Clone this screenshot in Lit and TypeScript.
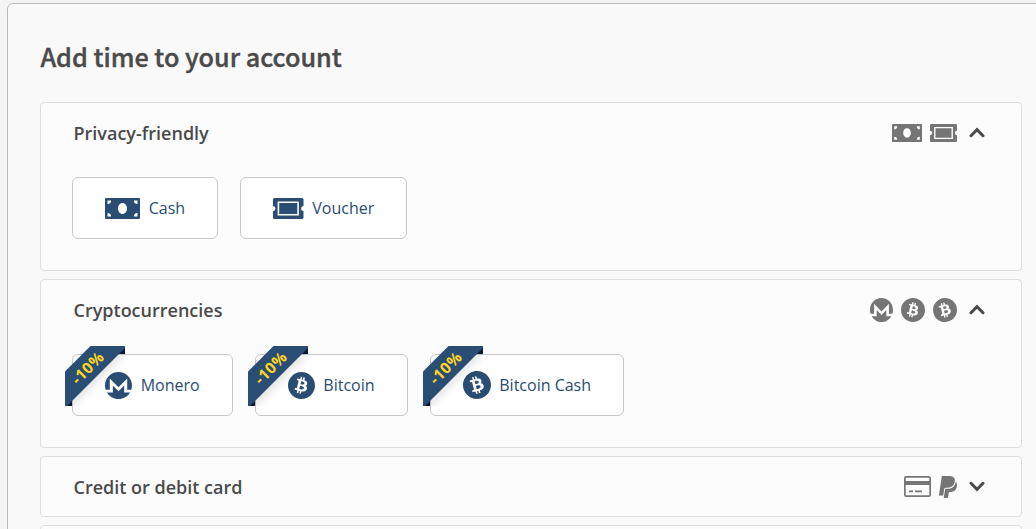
import { LitElement, html, css, svg, nothing } from "lit";
import { customElement, property } from "lit/decorators.js";

interface Method {
  icon: string;
  label: string;
  discount?: string;
}

interface Group {
  title: string;
  icons: string[];
  open: boolean;
  methods: Method[];
}

const GROUPS: Group[] = [
  {
    title: "Privacy-friendly",
    icons: ["cash", "voucher"],
    open: true,
    methods: [
      { icon: "cash", label: "Cash" },
      { icon: "voucher", label: "Voucher" },
    ],
  },
  {
    title: "Cryptocurrencies",
    icons: ["monero", "bitcoin", "bitcoin-cash"],
    open: true,
    methods: [
      { icon: "monero", label: "Monero", discount: "-10%" },
      { icon: "bitcoin", label: "Bitcoin", discount: "-10%" },
      { icon: "bitcoin-cash", label: "Bitcoin Cash", discount: "-10%" },
    ],
  },
  {
    title: "Credit or debit card",
    icons: ["card", "paypal"],
    open: false,
    methods: [],
  },
  { title: "", icons: [], open: false, methods: [] },
];

const coin =
  "M504 256c0 136.967-111.033 248-248 248S8 392.967 8 256 119.033 8 256 8s248 111.033 248 248zm-141.651-35.33c4.937-32.999-20.191-50.739-54.55-62.573l11.146-44.702-27.213-6.781-10.851 43.524c-7.154-1.783-14.502-3.464-21.803-5.13l10.929-43.81-27.198-6.781-11.153 44.686c-5.922-1.349-11.735-2.682-17.377-4.084l.031-.14-37.53-9.37-7.239 29.062s20.191 4.627 19.765 4.913c11.022 2.751 13.014 10.044 12.68 15.825l-12.696 50.925c.76.194 1.744.473 2.829.907-.907-.225-1.876-.473-2.876-.713l-17.796 71.338c-1.349 3.348-4.767 8.37-12.471 6.464.271.395-19.78-4.937-19.78-4.937l-13.51 31.147 35.414 8.827c6.588 1.651 13.045 3.379 19.4 5.006l-11.262 45.213 27.182 6.781 11.153-44.733a1038.209 1038.209 0 0 0 21.687 5.627l-11.115 44.523 27.213 6.781 11.262-45.128c46.404 8.781 81.299 5.239 95.986-36.727 11.834-33.79-.589-53.281-25.004-65.991 17.78-4.098 31.174-15.792 34.747-39.949zm-62.177 87.179c-8.41 33.79-65.308 15.523-83.755 10.943l14.944-59.899c18.446 4.603 77.6 13.717 68.811 48.956zm8.417-87.667c-7.673 30.736-55.031 15.12-70.393 11.292l13.548-54.327c15.363 3.828 64.836 10.973 56.845 43.035z";

const ICONS: Record<string, { box: string; shape: unknown }> = {
  cash: {
    box: "0 0 35 21",
    shape: svg`<path fill-rule="evenodd" d="M1 0h33a1 1 0 0 1 1 1v19a1 1 0 0 1-1 1H1a1 1 0 0 1-1-1V1a1 1 0 0 1 1-1zM17.500 5c-2.500 0-4.500 2.400-4.500 5.500s2 5.500 4.500 5.500 4.500-2.400 4.500-5.500S20 5 17.500 5zM2.500 2.500v3.600A3.600 3.600 0 0 0 6.100 2.500zM32.500 2.500h-3.600a3.600 3.600 0 0 0 3.600 3.600zM2.500 18.500h3.600a3.600 3.600 0 0 0-3.600-3.600zM32.500 18.500v-3.600a3.600 3.600 0 0 0-3.600 3.600z" />`,
  },
  voucher: {
    box: "0 0 31 21",
    shape: svg`<path fill-rule="evenodd" d="M1.500 0h28A1.500 1.500 0 0 1 31 1.500V8a2.500 2.500 0 0 0 0 5v6.500a1.500 1.500 0 0 1-1.500 1.500h-28A1.500 1.500 0 0 1 0 19.500V13a2.500 2.500 0 0 0 0-5V1.500A1.500 1.500 0 0 1 1.500 0zM4.700 3.500v14h21.600v-14zM6.300 5.100h18.400v10.800H6.300z" />`,
  },
  monero: {
    box: "0 8 496 496",
    shape: svg`<path d="M352 384h108.400C417 455.900 338.100 504 248 504S79 455.900 35.600 384H144V256.200L248 361l104-105v128zM88 336V128l159.400 159.400L408 128v208h74.800c8.500-25.100 13.200-52 13.200-80C496 119 385 8 248 8S0 119 0 256c0 28 4.600 54.900 13.200 80H88z" />`,
  },
  bitcoin: {
    box: "8 8 496 496",
    shape: svg`<path d=${coin} />`,
  },
  "bitcoin-cash": {
    box: "8 8 496 496",
    shape: svg`<path transform="rotate(-28 256 256)" d=${coin} />`,
  },
  card: {
    box: "0 0 27 21",
    shape: svg`<path fill-rule="evenodd" d="M2.300 0h22.400A2.300 2.300 0 0 1 27 2.300v16.400a2.300 2.300 0 0 1-2.300 2.300H2.300A2.300 2.300 0 0 1 0 18.700V2.300A2.300 2.300 0 0 1 2.300 0zM2.300 1.700a.6.6 0 0 0-.6.6V5h23.600V2.300a.6.6 0 0 0-.6-.6zM1.700 9v9.700a.6.6 0 0 0 .6.6h22.400a.6.6 0 0 0 .6-.6V9zM5 14.500h4v1.700H5zM11 14.500h7v1.700h-7z" />`,
  },
  paypal: {
    box: "0 29.500 384 453.500",
    shape: svg`<path d="M111.400 295.900c-3.500 19.200-17.400 108.700-21.500 134-.3 1.800-1 2.500-3 2.500H12.300c-7.600 0-13.100-6.600-12.100-13.900L58.800 46.600c1.500-9.600 10.100-16.900 20-16.900 152.300 0 165.100-3.700 204 11.400 60.100 23.300 65.600 79.500 44 140.300-21.500 62.600-72.500 89.500-140.100 90.300-43.400.7-69.500-7-75.300 24.200zM357.100 152c-1.800-1.300-2.500-1.800-3 1.300-2 11.400-5.100 22.500-8.800 33.600-39.900 113.800-150.500 103.900-204.500 103.900-6.100 0-10.100 3.300-10.900 9.400-22.600 140.400-27.100 169.700-27.100 169.700-1 7.100 3.500 12.900 10.600 12.900h63.500c8.600 0 15.700-6.300 17.400-14.900.7-5.400-1.100 6.100 14.400-91.300 4.600-22 14.300-19.700 29.300-19.700 71 0 126.400-28.800 142.900-112.300 6.500-34.800 4.600-71.400-23.800-92.600z" />`,
  },
  chevron: {
    box: "0 0 16 11",
    shape: svg`<path d="M2 8.700 8 2.700l6 6" fill="none" stroke="currentColor" stroke-width="3" stroke-linecap="round" />`,
  },
};

function icon(name: string) {
  const { box, shape } = ICONS[name];
  return html`<svg class="icon ${name}" viewBox=${box} preserveAspectRatio="none" aria-hidden="true">${shape}</svg>`;
}

@customElement("payment-method")
class PaymentMethod extends LitElement {
  static styles = css`
    :host {
      display: block;
    }
    .method {
      position: relative;
      display: flex;
      align-items: center;
      gap: 8.7px;
      box-sizing: border-box;
      height: 62px;
      padding: 0 32px;
      border: 1px solid #c8c8c8;
      border-radius: 6px;
      background: #fff;
      color: #294d73;
      font: 16px/24px "Open Sans", sans-serif;
      white-space: nowrap;
    }
    .icon {
      display: block;
      width: 27px;
      height: 27px;
      fill: currentColor;
    }
    .cash {
      width: 35px;
      height: 21px;
    }
    .voucher {
      width: 30.5px;
      height: 21px;
    }
    .bitcoin-cash {
      width: 28px;
      height: 28px;
    }
    .ribbon {
      position: absolute;
      top: -9px;
      left: -8px;
      width: 60px;
      height: 60px;
      overflow: hidden;
    }
    .fold {
      fill: #0c1c2d;
    }
    .band {
      fill: #294d73;
      filter: drop-shadow(0 5px 5px rgba(0, 0, 0, 0.12));
    }
    .discount {
      fill: #ffd524;
      font: bold 15.5px "Open Sans", sans-serif;
      letter-spacing: 0.5px;
      text-anchor: middle;
    }
  `;

  @property() icon = "";
  @property() label = "";
  @property() discount?: string;

  renderRibbon() {
    return html`
      <svg class="ribbon" viewBox="0 0 60 60">
        <path class="fold" d="M50 0h10v8h-8zM0 50v10h7v-8z" />
        <path class="band" d="M25.500 0H60v2L2 60H0V25.500z" />
        <text class="discount" transform="translate(26.500 25.800) rotate(-45)">${this.discount}</text>
      </svg>
    `;
  }

  render() {
    return html`
      <div class="method">
        ${this.discount ? this.renderRibbon() : nothing} ${icon(this.icon)}
        <span>${this.label}</span>
      </div>
    `;
  }
}

@customElement("payment-group")
class PaymentGroup extends LitElement {
  static styles = css`
    :host {
      display: block;
    }
    .group {
      border: 1px solid #dedede;
      border-radius: 4px;
      background: #fcfcfc;
    }
    .header {
      display: flex;
      align-items: center;
      height: 59px;
      padding: 0 36px 0 32.5px;
      color: #4a4a4a;
    }
    .title {
      flex: 1;
      margin: 0;
      font: 600 18px/24px "Open Sans", sans-serif;
    }
    .icons {
      display: flex;
      align-items: center;
      gap: 8px;
      margin-right: 12px;
      color: #757575;
    }
    .icon {
      display: block;
      width: 24px;
      height: 24px;
      fill: currentColor;
    }
    .monero {
      width: 23px;
    }
    .cash {
      width: 30px;
      height: 18px;
    }
    .voucher {
      width: 27px;
      height: 18px;
    }
    .card {
      width: 27px;
      height: 21px;
    }
    .paypal {
      width: 18px;
      height: 22px;
    }
    .chevron {
      width: 16px;
      height: 11px;
      transform: rotate(180deg);
    }
    .open .chevron {
      transform: none;
    }
    .methods {
      display: flex;
      gap: 22px;
      padding: 15px 31px 31px;
    }
  `;

  @property({ attribute: false }) group!: Group;

  render() {
    const { title, icons, open, methods } = this.group;
    return html`
      <section class="group ${open ? "open" : ""}">
        <div class="header">
          <h2 class="title">${title}</h2>
          <div class="icons">${icons.map((name) => icon(name))}</div>
          ${icon("chevron")}
        </div>
        ${open
          ? html`<div class="methods">
              ${methods.map(
                (m) => html`<payment-method .icon=${m.icon} .label=${m.label} .discount=${m.discount}></payment-method>`
              )}
            </div>`
          : nothing}
      </section>
    `;
  }
}

@customElement("app-root")
class AppRoot extends LitElement {
  static styles = css`
    :host {
      display: block;
      box-sizing: border-box;
      height: 529px;
      padding: 3px 0 0 7px;
      overflow: hidden;
      background: #f4f4f4;
    }
    .panel {
      box-sizing: border-box;
      width: 1049px;
      height: 600px;
      padding: 32px 33px 0 32px;
      border: 1px solid #bbb;
      border-radius: 6px;
      background: #f9f9f9;
    }
    .heading {
      margin: 0 0 26px;
      padding-left: 0.4px;
      color: #4a4a4a;
      font: 500 25.2px/40px "Noto Sans CJK SC", sans-serif;
      -webkit-text-stroke: 0.4px #4a4a4a;
    }
    .groups {
      display: grid;
      gap: 8px;
    }
  `;

  render() {
    return html`
      <main class="panel">
        <h1 class="heading">Add time to your account</h1>
        <div class="groups">
          ${GROUPS.map((group) => html`<payment-group .group=${group}></payment-group>`)}
        </div>
      </main>
    `;
  }
}
